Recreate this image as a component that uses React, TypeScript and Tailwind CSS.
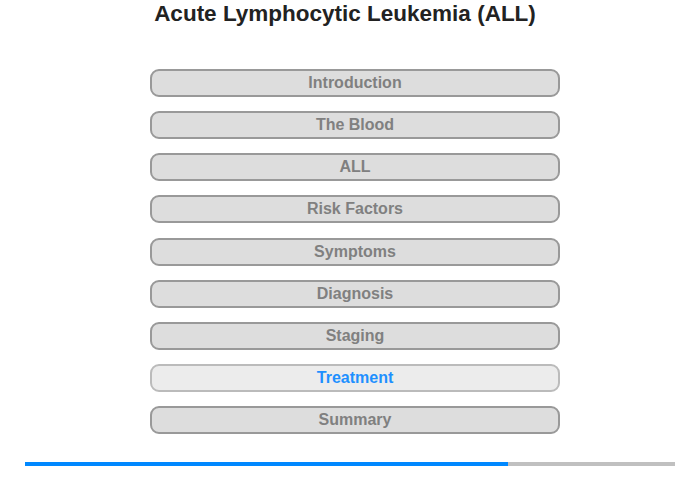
import React from "react";

const items = [
  "Introduction",
  "The Blood",
  "ALL",
  "Risk Factors",
  "Symptoms",
  "Diagnosis",
  "Staging",
  "Treatment",
  "Summary",
];

export default function App() {
  return (
    <div
      className="w-[700px] h-[480px] bg-white relative overflow-hidden"
      style={{ fontFamily: '"Liberation Sans", Arial, sans-serif' }}
    >
      <h1 className="w-[690px] text-center text-[22.5px] leading-[28px] font-bold text-[#222222]">
        Acute Lymphocytic Leukemia (ALL)
      </h1>
      <div className="ml-[150px] w-[410px] mt-[41px] flex flex-col gap-[14.125px]">
        {items.map((it) => {
          const active = it === "Treatment";
          return (
            <div
              key={it}
              className={
                active
                  ? "h-[28px] rounded-[9px] border-2 border-[#bbbbbb] bg-[#ececec] flex items-center justify-center text-[16px] font-bold text-[#1e90ff]"
                  : "h-[28px] rounded-[9px] border-2 border-[#999999] bg-[#dddddd] flex items-center justify-center text-[16px] font-bold text-[#808080]"
              }
            >
              {it}
            </div>
          );
        })}
      </div>
      <div className="ml-[25px] w-[650px] h-[4px] mt-[28px] bg-[#c0c0c0] flex">
        <div className="h-full w-[483px] bg-[#0088ff]" />
      </div>
    </div>
  );
}
